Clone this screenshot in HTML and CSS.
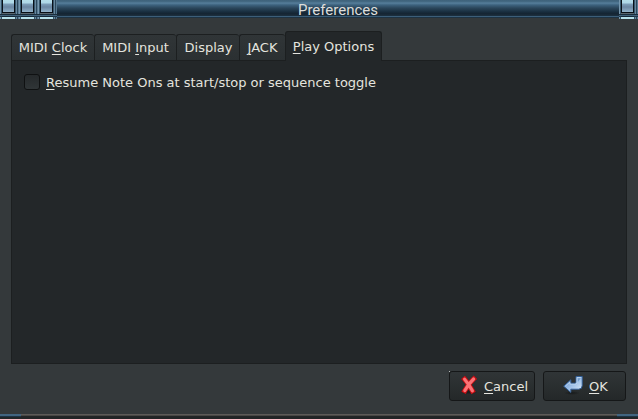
FILE: index.html
```html
<!DOCTYPE html>
<html lang="en">
<head>
<meta charset="utf-8">
<title>Preferences</title>
<link rel="stylesheet" href="styles.css">
</head>
<body>
<div class="window">
  <header class="titlebar">
    <div class="controls"><i class="control"></i><i class="control"></i><i class="control"></i></div>
    <div class="title">Preferences</div>
    <div class="controls controls-end"><i class="control"></i></div>
  </header>
  <main class="content">
    <nav class="tabs">
      <div class="tab clock"><span>MIDI <u>C</u>lock</span></div>
      <div class="tab input"><span>MIDI <u>I</u>nput</span></div>
      <div class="tab display"><span>Display</span></div>
      <div class="tab jack"><span><u>J</u>ACK</span></div>
      <div class="tab active"><span><u>P</u>lay Options</span></div>
    </nav>
    <section class="panel">
      <label class="option"><span class="checkbox"></span><span class="option-label"><u>R</u>esume Note Ons at start/stop or sequence toggle</span></label>
    </section>
    <div class="actions">
      <button class="button cancel">
        <svg class="icon" width="20" height="20" viewBox="0 0 20 20">
          <defs><radialGradient id="shade"><stop offset="0" stop-color="#101213" stop-opacity=".7"/><stop offset="1" stop-color="#101213" stop-opacity="0"/></radialGradient></defs>
          <ellipse cx="10" cy="17" rx="9" ry="2.5" fill="url(#shade)"/>
          <path d="M5.6 4.2 Q9.8 9 13.4 15.8 M14.6 4 Q9.3 9 5.8 15.6" fill="none" stroke="#c90d12" stroke-width="5" stroke-linecap="square"/>
          <path d="M5.6 4.2 Q9.8 9 13.4 15.8 M14.6 4 Q9.3 9 5.8 15.6" fill="none" stroke="#fa7376" stroke-width="3.2" stroke-linecap="round"/>
        </svg>
        <span class="button-label"><u>C</u>ancel</span>
      </button>
      <button class="button ok">
        <svg class="icon" width="20" height="20" viewBox="0 0 20 20">
          <defs><linearGradient id="blue" x1="0" x2="1" y2="1"><stop stop-color="#618fc8"/><stop offset=".55" stop-color="#a2c3e9"/><stop offset="1" stop-color="#e4f0fb"/></linearGradient></defs>
          <ellipse cx="9" cy="18" rx="8" ry="2" fill="url(#shade)"/>
          <path d="M.7 11.2 L7.8 4.8 V8.2 H12.3 L13 7.2 V1.5 H19.2 V10.5 Q19.2 14.2 15.5 14.2 H7.8 V17.4 Z" fill="url(#blue)" stroke="#335f97"/>
          <path d="M2.4 11.2 L6.8 7.1 V9.2 H13 L14 7.8 V2.5 H18.2" fill="none" stroke="#bdd5ef" stroke-width=".8"/>
          <path d="M14.8 7 V3.3 H17.7 Z" fill="#6f9acb"/>
        </svg>
        <span class="button-label"><u>O</u>K</span>
      </button>
    </div>
  </main>
  <footer class="frame"><i class="grip"></i><i class="edge"></i><i class="grip"></i></footer>
</div>
</body>
</html>
```
FILE: styles.css
```css
* { box-sizing: border-box; }
body { margin: 0; overflow: hidden; }
.window {
  width: 638px; height: 419px; display: flex; flex-direction: column;
  background: #34393b; color: #e4e4df; font: 13px/16px "DejaVu Sans", sans-serif;
}
u { text-decoration: underline; text-decoration-thickness: 1px; text-underline-offset: 2px; }
.titlebar {
  height: 19px; flex: none; display: flex; justify-content: space-between;
  background: linear-gradient(#3e617a 0, #456b85 2px, #58809d 3px, #3d627e 5px, #2b465b 8px, #182d3e 12px, #142331 14px, #1b2e3d 15px, #1b2e3d 16px, #3c5e79 16px, #3c5e79 17px, #213748 17px, #1b2e3d 18px, #34393b 18px);
}
.controls {
  width: 57px; display: flex; gap: 6px; padding-left: 2px;
  background:
    linear-gradient(#1b2e3d, #1b2e3d) 0 14px / 100% 1px no-repeat,
    linear-gradient(#42637c, #42637c) 0 15px / 100% 1px no-repeat,
    linear-gradient(#213748, #213748) 0 16px / 100% 1px no-repeat,
    linear-gradient(90deg, #7697ae 0 1px, #36556b 1px 2px, transparent 2px 15px, #36556b 15px 16px, #68879d 16px 17px, #2b485d 17px 18px, #587a92 18px 19px) 0 0 / 19px 100%;
}
.controls-end { width: 19px; }
.control {
  width: 13px; height: 19px; flex: none;
  background:
    linear-gradient(#091017, #091017) 0 0 / 1px 13px no-repeat,
    linear-gradient(#091017, #091017) 100% 0 / 1px 13px no-repeat,
    linear-gradient(#b4dce9 0, #add7e7 3px, #7e9fba 4px, #6b87a3 7px, #91b2ca 12px, #091017 12px, #091017 13px, #5b666d 13px, #5b666d 14px, #1b2e3d 14px, #1b2e3d 15px, #42637c 15px, #42637c 16px, #152735 16px, #152735 17px, #b7e2ec 17px);
}
.title { flex: 1; text-align: center; font: 15px/20px Roboto, sans-serif; color: #dededb; }
.content { flex: 1; display: flex; flex-direction: column; padding: 12px 11px 0; }
.tabs { height: 30px; display: flex; align-items: flex-end; margin-bottom: -1px; }
.tab {
  height: 27px; flex: none; padding-top: 5px; text-align: center; white-space: nowrap;
  background: linear-gradient(#303537, #2b3032); border: 1px solid #1c1f20; border-right: 0; border-radius: 3px 3px 0 0;
}
.clock { width: 83px; }
.input { width: 82px; }
.display { width: 63px; padding-left: 1px; }
.jack { width: 46px; }
.active { width: 97px; height: 30px; padding-top: 7px; background: #232729; border-right: 1px solid #1c1f20; border-bottom: 0; z-index: 1; }
.panel { height: 304px; flex: none; background: #232729; border: 1px solid #1c1f20; padding: 13px 12px; }
.option { height: 16px; display: flex; gap: 6px; align-items: center; white-space: nowrap; }
.option-label { padding-top: 2px; }
.checkbox { width: 16px; height: 16px; border: 1px solid #0f1112; border-radius: 3px; background: linear-gradient(#25292b, #303537); }
.actions { display: flex; justify-content: flex-end; gap: 8px; padding: 7px 1px 0 0; }
.button {
  height: 30px; margin: 0; padding: 0; display: flex; align-items: center; color: #e4e4df;
  font: 13px/16px "DejaVu Sans", sans-serif; border: 1px solid #151718; border-radius: 3px;
  background: linear-gradient(#303537, #242829);
}
.button-label { padding-top: 2px; }
.cancel { position: relative; width: 86px; padding-left: 9px; gap: 5px; }
.cancel::before { content: ""; position: absolute; left: -1px; top: -1px; width: 1px; height: 1px; background: #b7b9b9; }
.ok { width: 83px; padding-left: 19px; gap: 6px; }
.icon { flex: none; margin-top: -2px; }
.frame { height: 5px; flex: none; display: flex; }
.grip { width: 21px; background: linear-gradient(#426580 0 2px, #1d3345 2px 3px, #202628 3px); }
.edge { flex: 1; background: linear-gradient(#5d5b58 0 1px, #494846 1px 2px, #222526 2px); }
```
